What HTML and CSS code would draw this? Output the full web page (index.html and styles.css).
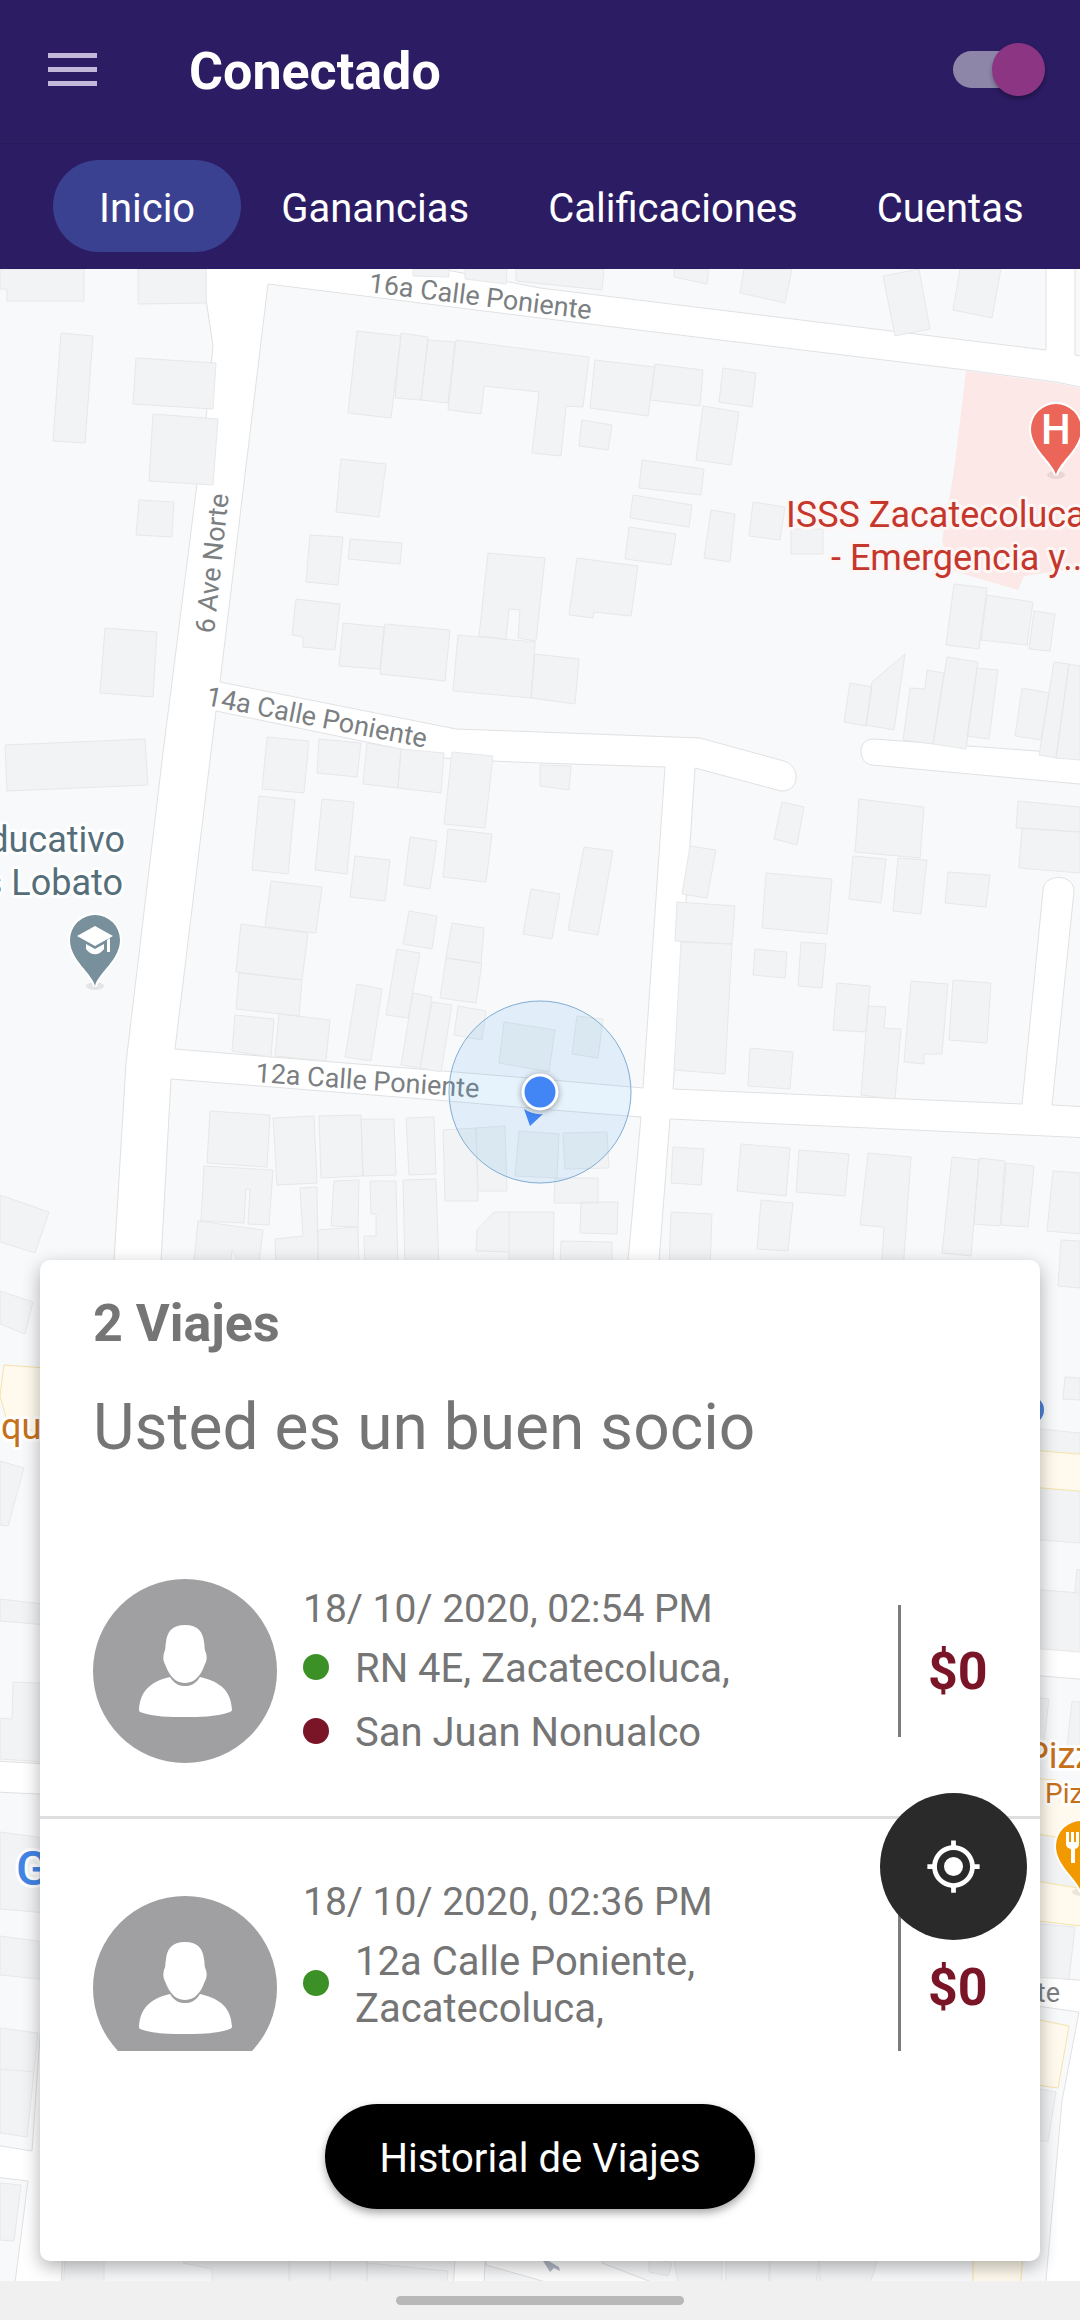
FILE: index.html
```html
<!DOCTYPE html>
<html lang="es">

<head>
    <meta charset="UTF-8">
    <meta name="viewport" content="width=device-width, initial-scale=1.0">
    <title>Conectado</title>
    <link rel="stylesheet" href="styles.css">
</head>

<body>

    <header class="header">
        <div class="topbar">
            <button class="menu" type="button" aria-label="Menú">
                <svg width="49" height="34" viewBox="0 0 49 34"><path d="M0 0h49v5H0zM0 14h49v5H0zM0 28h49v5H0z"/></svg>
            </button>
            <h1 class="title">Conectado</h1>
            <input class="switch" type="checkbox" role="switch" aria-label="Conectado" checked>
        </div>
        <nav class="tabs">
            <a class="tab active" href="#inicio">Inicio</a>
            <a class="tab" href="#ganancias">Ganancias</a>
            <a class="tab" href="#calificaciones">Calificaciones</a>
            <a class="tab" href="#cuentas">Cuentas</a>
        </nav>
    </header>

    <main class="content">
        <svg class="map" viewBox="0 268 1080 2013" preserveAspectRatio="xMidYMin slice">
            <defs>
                <path id="pin" d="M0 46C-3 33-25 20-25 0A25 25 0 1 1 25 0C25 20 3 33 0 46z"/>
            </defs>

            <!-- manzanas -->
            <g class="blocks">
                <path d="M-5 260H206V298L213 345L206 417L197 483L162 760L126 1062L114 1260L100 1500L80 1765L-5 1760z"/>
                <path d="M-5 1791L60 1794L40 2035L32 2150L-5 2144z"/>
                <path d="M-5 2176L28 2180L14 2290H-5z"/>
                <path d="M400 260L540 287L1046 349V260z"/>
                <path d="M1075 260V354L1090 356V260z"/>
                <path d="M268 283L540 317L966 369L1056 381L1090 388V754L874 738C866 738 861 743 861 750C861 758 865 763 872 764L1090 784V1106L1052 1104L1074 890C1074 872 1043 872 1043 890L1022 1103L673 1088L690 843L695 767L781 790C799 791 802 766 784 760L700 737L540 731L456 728L220 681z"/>
                <path d="M216 710L444 757L492 760L540 762L665 766L643 1087L540 1078L175 1048z"/>
                <path d="M171 1078L448 1100L540 1108L641 1116L628 1260L600 1600H140L161 1260z"/>
                <path d="M670 1118L1090 1137V1649L1030 1645L640 1600L659 1260z"/>
                <path d="M1030 1674L1090 1679V1980L1030 1975z"/>
                <path d="M1030 2004L1079 2011L1062 2100L1045 2290H675L602 2262L640 2100z"/>
                <path d="M63 2240H456L453 2290H61z"/>
                <path d="M486 2240V2264L560 2285H484z"/>
            </g>

            <path class="hospital" d="M966 370L1056 382L1080 387V567L1024 575L1018 589L953 570L942 540L954 470z"/>

            <!-- edificios -->
            <path class="buildings" d="M0 268H84V300H7V288H0zM138 268H206V302L138 303zM61 332L93 335L85 442L53 440zM136 357L216 362L213 408L133 403zM153 413L218 418L213 484L149 480zM139 499L174 501L172 536L136 534zM105 627L157 631L153 696L100 692zM5 744L145 738L148 784L7 790z
                M357 330L401 335L391 417L348 412zM401 332L428 336L421 399L395 397zM428 339L455 341L448 402L421 399zM456 339L589 356L583 406L566 405L561 455L532 452L539 391L484 385L481 413L448 409zM341 458L386 463L379 516L336 511zM310 534L343 536L338 584L306 581zM350 538L402 542L400 563L348 558z
                M296 598L340 603L335 649L303 646V636L292 634zM343 622L384 626L380 668L339 665zM385 623L450 629L445 680L380 673zM488 552L545 557L536 640L518 637L520 609L509 608L506 638L479 635zM458 634L535 641L531 697L453 690zM535 653L579 658L575 703L531 697z
                M267 736L309 740L304 792L262 788zM319 738L361 742L357 776L317 772zM367 742L401 748L398 787L363 783zM401 748L444 752L441 792L398 787zM452 751L493 755L485 827L444 823zM413 268H449V276L413 275zM465 268H507L506 283L465 278zM516 268H604L602 289L516 280z
                M674 268H709L707 283L674 276zM744 268H792L785 302L740 292zM883 275L919 268L930 328L895 335zM960 268H1001L992 317L953 309zM595 359L655 366L648 415L590 407zM655 363L703 369L700 405L650 399zM723 367L756 372L752 406L719 401zM703 405L739 411L731 464L696 459zM582 419L612 424L608 449L579 445z
                M642 459L704 468L701 494L639 487zM633 494L692 504L689 526L630 517zM629 526L676 533L671 564L625 558zM711 509L735 513L730 561L704 557zM753 501L785 506L780 539L749 535zM791 528H823V553H791zM577 557L638 565L631 615L594 611L593 617L569 614z
                M954 583L987 587L979 648L946 644zM987 594L1033 601L1027 644L981 639zM1034 610L1055 613L1050 650L1029 648zM850 682L872 686L866 725L844 721zM872 681L905 653L894 729L866 724zM927 669L944 672L933 743L903 739L910 687L925 688zM947 656L978 661L966 748L933 743zM977 667L998 669L989 738L967 735zM1022 687L1049 692L1041 739L1015 735zM1054 661L1069 663L1056 757L1039 754zM1069 663L1080 665V759L1056 757z
                M259 795L295 799L288 873L252 869zM322 798L354 801L347 873L315 869zM355 855L390 859L385 900L350 896zM410 836L437 840L430 888L404 884zM448 828L492 833L486 881L443 876zM271 880L322 886L316 932L265 926zM241 923L308 932L302 979L236 971zM239 972L302 979L299 1015L236 1008zM235 1014L274 1018L271 1056L232 1050zM279 1013L330 1019L326 1060L275 1055z
                M357 983L382 988L371 1060L345 1056zM397 948L420 952L408 1017L386 1014zM413 992L432 996L420 1067L401 1064zM432 1001L452 1004L441 1071L420 1067zM409 910L437 915L432 948L403 943zM452 922L484 927L481 962L446 957zM446 957L482 962L476 1002L440 997zM458 1005L486 1010L482 1039L454 1034zM504 1021L555 1029L549 1071L499 1062zM577 1015L603 1018L598 1057L572 1053zM531 888L560 893L552 938L523 933zM584 846L613 850L598 934L568 929z
                M210 1110L270 1114L267 1166L207 1162zM273 1117L314 1115L317 1182L277 1184zM319 1115L361 1114L363 1175L321 1177zM361 1118H394L396 1174L363 1175zM406 1117L434 1116L436 1173L409 1174zM443 1129L476 1127L478 1200H445zM476 1127L505 1125L507 1190H478zM519 1130L559 1133L557 1177L515 1175zM563 1132L607 1131L609 1167L565 1168z
                M204 1165L273 1169L269 1224L248 1223L250 1188H246L244 1222L201 1220zM198 1220L263 1229L258 1270H243L232 1249L230 1270H193zM300 1187L317 1186L318 1270H276L275 1238L303 1235zM334 1180L359 1179L358 1226L331 1225zM318 1229L358 1226L359 1270H318zM370 1180H396L398 1270H365L364 1235H376V1213H371zM403 1179L436 1178L439 1270H405zM494 1211H554L553 1270H509V1251L476 1250L477 1229zM509 1211V1251M0 1194L49 1211L35 1252L0 1241z
                M540 764L571 765L569 789L540 785zM782 801L804 806L797 844L774 838zM859 798L924 806L920 857L855 851zM1018 800L1080 806V831L1016 827zM1022 827L1080 831V872L1019 867zM690 845L716 849L707 897L682 893zM766 872L832 878L827 933L762 927zM853 855L886 858L881 902L849 898zM898 857L927 859L921 913L893 910zM948 871L990 874L986 906L945 902z
                M677 901L735 905L732 943L675 940zM681 941L732 943L725 1073L674 1069zM755 948L787 951L785 977L753 974zM801 941L826 943L822 987L798 985zM837 982L870 985L866 1031L833 1029zM868 1005L886 1006L884 1027L901 1028L895 1098L861 1094zM911 980L948 983L942 1053H924V1063L904 1061zM953 979L991 982L987 1042L949 1039zM750 1047L793 1051L790 1088L748 1085z
                M673 1146L704 1148L701 1184L671 1182zM741 1143L790 1147L786 1195L737 1190zM799 1149L849 1153L845 1195L796 1191zM868 1152L911 1156L903 1270H881L884 1226L860 1224zM952 1156L979 1159L971 1255L942 1252zM979 1157L1005 1160L1000 1225L974 1223zM1006 1162L1034 1165L1028 1226L1001 1224zM1053 1170L1080 1172V1233L1047 1230zM1061 1239L1080 1240V1287L1058 1285zM761 1199L793 1202L788 1250L757 1248zM671 1211L712 1213L710 1270H669zM555 1177H598V1202H554zM581 1201H618L617 1233L580 1232zM561 1240L612 1241V1270H560z
                M0 1290L33 1301L25 1333L0 1323zM0 1460L24 1467L8 1525L0 1524zM0 1598L60 1605V1625L0 1620zM13 1681L60 1683V1762L0 1758V1717L12 1718zM0 1831L60 1839V1913L0 1908zM0 1935L60 1943V1980L0 1974zM0 2027L38 2032L27 2136L0 2132zM0 2068L34 2071M0 2182L21 2184L14 2240L0 2239z
                M1065 1376L1080 1377V1399L1063 1398zM1030 1427L1080 1432V1542L1030 1538zM1030 1588L1080 1592V1651L1030 1647zM1077 1568L1080 1569V1590L1075 1590zM1030 1696L1049 1698L1044 1740H1030zM1072 1700L1080 1701V1746L1067 1745zM1030 1832L1080 1839V1890L1030 1880zM1030 1922L1075 1926L1069 1978L1030 1976zM1040 2088L1056 2091L1048 2140H1030z
                M66 2240H104V2290H63zM183 2262L212 2268V2290H290V2240H183zM290 2240H330V2290H288zM330 2240H367V2290H330zM367 2240V2262L448 2270L446 2290H367zM649 2255L672 2262L668 2275L649 2271zM672 2250H722V2290H680zM727 2250H770V2290H725zM770 2250H820V2290H768zM820 2250H880L868 2290H815z"/>

            <path class="commerce" d="M4 1364L60 1368V1440L7 1420L0 1395zM1030 1449L1090 1454V1491L1030 1486zM1030 1777L1055 1779L1090 1790V1841L1030 1832zM1030 1879L1090 1889V1926L1030 1919zM1030 2017L1069 2025L1058 2087L1030 2083zM973 2240H1024L1020 2290H973z"/>

            <!-- nombres de calles y lugares -->
            <g class="streets">
                <text transform="translate(368 291) rotate(7)">16a Calle Poniente</text>
                <text transform="translate(214 633) rotate(-84)">6 Ave Norte</text>
                <text transform="translate(205 704) rotate(11)">14a Calle Poniente</text>
                <text transform="translate(255 1081) rotate(4)">12a Calle Poniente</text>
                <text x="1060" y="2001" text-anchor="end">te</text>
            </g>
            <g class="places">
                <text class="red" x="786" y="526">ISSS Zacatecoluca</text>
                <text class="red" x="831" y="569">- Emergencia y...</text>
                <text class="slate" x="125" y="851" text-anchor="end">Educativo</text>
                <text class="slate" x="123" y="894" text-anchor="end">es Lobato</text>
                <text class="orange" x="1" y="1438">qu</text>
                <text class="orange" x="1026" y="1767">Pizza</text>
                <text class="orange small" x="1045" y="1802">Pizza</text>
                <text class="google" x="16" y="1884">G</text>
            </g>

            <!-- marcadores -->
            <g class="marker" transform="translate(1056 428)">
                <ellipse class="pin-shadow" cx="0" cy="46" rx="9" ry="4"/>
                <use href="#pin" fill="#ec6559"/>
                <text class="pin-letter" y="15" text-anchor="middle">H</text>
            </g>
            <g class="marker" transform="translate(95 939)">
                <ellipse class="pin-shadow" cx="0" cy="46" rx="9" ry="4"/>
                <use href="#pin" fill="#78909c"/>
                <path fill="#fff" d="M-18-4L0-14L18-4L0 6zM-9 4L0 9L9 4V9C4 16-4 16-9 9zM12 0L15-2V12H12z"/>
            </g>
            <g class="marker" transform="translate(1081 1845)">
                <ellipse class="pin-shadow" cx="0" cy="46" rx="9" ry="4"/>
                <use href="#pin" fill="#f29900"/>
                <path fill="#fff" d="M-15-14h3v10h2v-10h3v10h2v-10h3v12q0 4-4 5v14h-4V3q-5-1-5-5z"/>
            </g>
            <circle cx="1030" cy="1409" r="14" fill="#4a80d9"/>
            <path fill="#b4b9c9" d="M540 2255L559 2266L560 2270L554 2267L550 2271z"/>

            <!-- ubicación actual -->
            <circle class="accuracy" cx="540" cy="1091" r="91"/>
            <path fill="#4285f4" d="M524 1108Q533 1114 543 1113L530 1125z"/>
            <circle class="me" cx="540" cy="1091" r="17"/>
        </svg>

        <section class="card">
            <h2 class="count">2 Viajes</h2>
            <p class="message">Usted es un buen socio</p>

            <ul class="trips">
                <li class="trip">
                    <svg class="avatar" viewBox="0 0 184 184">
                        <circle cx="92" cy="92" r="92"/>
                        <path d="M92 46C79 46 74 53 73 63C72 68 73 70 71 74C69 82 72 84 74 90C79 101 86 104 92 104C98 104 105 101 110 90C112 84 115 82 113 74C111 70 112 68 111 63C110 53 105 46 92 46zM77 98C82 106 87 107 92 107C97 107 102 106 107 98C128 103 138 112 139 131Q139 132 137 133C122 138 106 138 92 138C76 138 62 138 47 133Q46 132 46 131C47 113 56 103 77 98z"/>
                    </svg>
                    <div class="info">
                        <p class="date">18/ 10/ 2020, 02:54 PM</p>
                        <ul class="stops">
                            <li class="stop from">RN 4E, Zacatecoluca,</li>
                            <li class="stop to">San Juan Nonualco</li>
                        </ul>
                    </div>
                    <p class="amount">$0</p>
                </li>
                <li class="trip">
                    <svg class="avatar" viewBox="0 0 184 184">
                        <circle cx="92" cy="92" r="92"/>
                        <path d="M92 46C79 46 74 53 73 63C72 68 73 70 71 74C69 82 72 84 74 90C79 101 86 104 92 104C98 104 105 101 110 90C112 84 115 82 113 74C111 70 112 68 111 63C110 53 105 46 92 46zM77 98C82 106 87 107 92 107C97 107 102 106 107 98C128 103 138 112 139 131Q139 132 137 133C122 138 106 138 92 138C76 138 62 138 47 133Q46 132 46 131C47 113 56 103 77 98z"/>
                    </svg>
                    <div class="info">
                        <p class="date">18/ 10/ 2020, 02:36 PM</p>
                        <ul class="stops">
                            <li class="stop from">12a Calle Poniente,<br>Zacatecoluca,</li>
                            <li class="stop to">Zacatecoluca</li>
                        </ul>
                    </div>
                    <p class="amount">$0</p>
                </li>
            </ul>

            <button class="history" type="button">Historial de Viajes</button>

            <button class="locate" type="button" aria-label="Mi ubicación">
                <svg width="57" height="57" viewBox="0 0 24 24"><path d="M12 8a4 4 0 1 0 0 8 4 4 0 0 0 0-8zm8.940 3A8.990 8.990 0 0 0 13 3.060V1h-2v2.060A8.990 8.990 0 0 0 3.060 11H1v2h2.060A8.990 8.990 0 0 0 11 20.940V23h2v-2.060A8.990 8.990 0 0 0 20.940 13H23v-2h-2.060zM12 19a7 7 0 1 1 0-14 7 7 0 0 1 0 14z"/></svg>
            </button>
        </section>
    </main>

    <footer class="navbar"><span class="handle"></span></footer>

</body>

</html>
```
FILE: styles.css
```css
* {margin: 0; padding: 0; box-sizing: border-box;}
ul, li {list-style: none;}
a {text-decoration: none; color: inherit;}
button {border: 0; background: none; font: inherit; color: inherit;}

body {
    display: flex;
    flex-direction: column;
    min-height: 100vh;
    font-family: Roboto, "Liberation Sans", sans-serif;
    font-size: 40px;
    line-height: 47px;
    color: #757575;
    background: #f0f0f0;
}

/* cabecera */
.header {background: #2c1c64; color: #fff;}
.topbar {display: flex; align-items: center; height: 144px; padding: 0 35px 4px 48px; border-bottom: 1px solid #28195c;}
.menu {display: flex; margin-right: 92px;}
.menu svg {fill: #c3b8da;}
.title {flex: 1; padding-top: 4px; font-size: 52px; line-height: 61px; font-weight: 700;}

.switch {
    appearance: none;
    display: flex;
    align-items: center;
    justify-content: flex-end;
    width: 92px;
    height: 37px;
    border-radius: 19px;
    background: linear-gradient(#8e86a8, #8e86a8) left / 70px 37px no-repeat;
}
.switch::before {
    content: "";
    width: 53px;
    height: 53px;
    border-radius: 50%;
    background: #8c3583;
    box-shadow: 0 3px 4px rgba(0, 0, 0, .3);
}

.tabs {display: flex; height: 125px; padding: 16px 0 17px 53px; overflow: hidden;}
.tab {flex: none; padding: 25px 39px 0 40px; border-radius: 46px;}
.tab.active {padding: 25px 46px 0; background: #3b4191;}

/* mapa */
.content {
    position: relative;
    flex: 1;
    display: flex;
    flex-direction: column;
    justify-content: flex-end;
    padding: 0 40px 20px;
    overflow: hidden;
}
.map {position: absolute; top: 0; left: 0; width: 100%; height: 100%; background: #fff;}
.blocks {fill: #f8f9fb; stroke: #e0e1e3; stroke-width: 1;}
.buildings {fill: #f1f3f4; stroke: #e7e8ea; stroke-width: 1;}
.hospital {fill: #fce8e6;}
.commerce {fill: #fffaed; stroke: #f5e3a8; stroke-width: 1;}
.streets {font-size: 27px; fill: #7b7f82;}
.places {font-size: 36px; stroke: #fff; stroke-width: 6px; stroke-linejoin: round; paint-order: stroke;}
.places .red {fill: #c5372c; stroke: #fef6f5;}
.places .slate {fill: #546e7a;}
.places .orange {fill: #c5701a;}
.places .small {font-size: 28px;}
.places .google {font-size: 48px; font-weight: 500; fill: #4285e4;}
.marker use {stroke: #fff; stroke-width: 4; paint-order: stroke;}
.pin-shadow {fill: #000; opacity: .08;}
.pin-letter {font-size: 42px; font-weight: 500; fill: #fff;}
.accuracy {fill: rgba(66, 165, 235, .13); stroke: #7fadd4; stroke-width: 1;}
.me {fill: #4285f4; stroke: #fff; stroke-width: 3; filter: drop-shadow(0 1px 3px rgba(0, 0, 0, .4));}

/* tarjeta de viajes */
.card {
    position: relative;
    display: flex;
    flex-direction: column;
    padding: 33px 0 52px;
    border-radius: 10px;
    background: #fff;
    box-shadow: 0 6px 18px rgba(0, 0, 0, .3);
}
.count {padding: 0 53px; font-size: 52px; line-height: 61px; font-weight: 700;}
.message {margin: 35px 0 60px; padding: 0 53px; font-size: 64px; line-height: 77px;}

.trips {max-height: 525px; overflow-y: auto; scrollbar-width: none;}
.trip {display: flex; align-items: center; padding: 53px;}
.trip + .trip {border-top: 3px solid #dedede;}
.avatar {flex: none; width: 184px; height: 184px; margin-right: 26px;}
.avatar circle {fill: #a0a0a2;}
.avatar path {fill: #fff;}
.info {flex: 1; padding: 7px 0;}
.date {font-size: 39px;}
.stops {display: flex; flex-direction: column; gap: 17px; margin-top: 12px;}
.stop {display: flex; align-items: center; gap: 26px;}
.stop::before {content: ""; width: 26px; height: 26px; margin-bottom: 4px; border-radius: 50%;}
.from::before {background: #3c9126;}
.to::before {background: #7a1528;}
.amount {
    display: flex;
    align-items: center;
    align-self: stretch;
    width: 89px;
    margin: 26px 0;
    padding-left: 27px;
    border-left: 3px solid #7d7d7d;
    font-size: 52px;
    font-weight: 700;
    color: #7a1528;
}

.history {
    align-self: center;
    height: 105px;
    margin-top: 53px;
    padding: 3px 54px 0;
    border-radius: 53px;
    background: #000;
    color: #fff;
    box-shadow: 0 4px 8px rgba(0, 0, 0, .35);
}
.locate {
    position: absolute;
    right: 13px;
    bottom: 321px;
    display: flex;
    align-items: center;
    justify-content: center;
    width: 147px;
    height: 147px;
    border-radius: 50%;
    background: #2a2a2a;
}
.locate svg {fill: #fff;}

/* barra de navegación */
.navbar {display: flex; justify-content: center; height: 39px; padding-top: 15px; background: #f0f0f0;}
.handle {width: 288px; height: 9px; border-radius: 5px; background: #b8b8b8;}
```
